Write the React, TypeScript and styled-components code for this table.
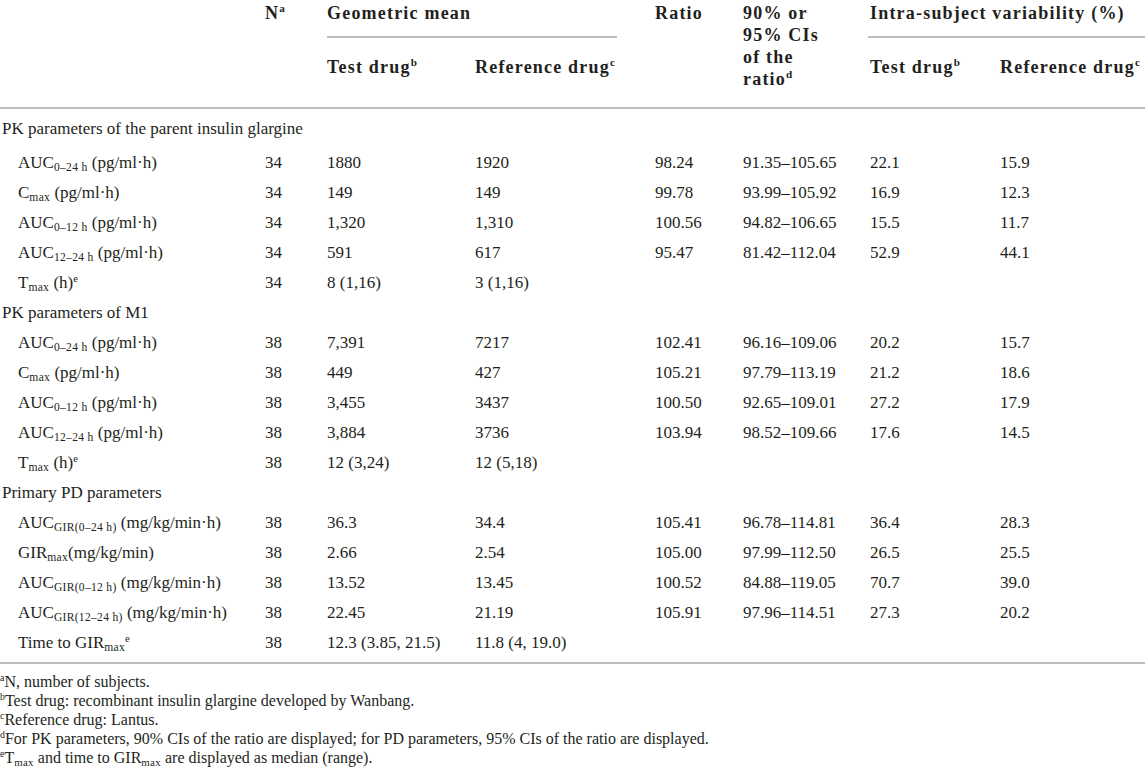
import React from "react";
import styled, { createGlobalStyle } from "styled-components";

const GlobalStyle = createGlobalStyle`
  html, body {
    margin: 0;
    padding: 0;
    background: #ffffff;
  }
  body {
    font-family: "Liberation Serif", "Times New Roman", serif;
    color: #231f20;
  }
`;

const Page = styled.div`
  width: 1145px;
  overflow: hidden;
`;

const Table = styled.table`
  width: 1145px;
  table-layout: fixed;
  border-collapse: collapse;
  font-size: 17px;
`;

const Head = styled.thead`
  border-bottom: 2px solid #bdbdbd;
`;

const Body = styled.tbody`
  border-bottom: 2px solid #bdbdbd;
`;

const TopCell = styled.th`
  padding: 2px 0 0;
  text-align: left;
  vertical-align: top;
  font-size: 18px;
  font-weight: bold;
  letter-spacing: 1.2px;
  line-height: 22px;
  white-space: nowrap;
`;

const SubCell = styled.th`
  padding: 18px 0 29px;
  text-align: left;
  vertical-align: top;
  font-size: 18px;
  font-weight: bold;
  letter-spacing: 1.2px;
  line-height: 22px;
  white-space: nowrap;
`;

const GroupTitle = styled.div<{ $trimRight: number; $pullLeft?: number }>`
  padding-bottom: 12px;
  border-bottom: 2px solid #bdbdbd;
  margin-right: ${(p) => p.$trimRight}px;
  margin-left: -${(p) => p.$pullLeft ?? 0}px;
  padding-left: ${(p) => p.$pullLeft ?? 0}px;
`;

const BodyRow = styled.tr<{ $height: number; $padBottom?: number }>`
  height: ${(p) => p.$height}px;
  & > td {
    padding-bottom: ${(p) => p.$padBottom ?? 0}px;
  }
`;

const Cell = styled.td`
  padding: 0;
  vertical-align: middle;
  line-height: 20px;
  white-space: nowrap;
`;

const SectionCell = styled(Cell)`
  padding-left: 2px;
`;

const LabelCell = styled(Cell)`
  && {
    padding-left: 18px;
  }
`;

const Sub = styled.sub`
  font-size: 0.68em;
  line-height: 0;
  vertical-align: -0.25em;
  letter-spacing: 0.3px;
`;

const Sup = styled.sup`
  font-size: 0.62em;
  line-height: 0;
  vertical-align: 0.6em;
  letter-spacing: 0;
`;

const Notes = styled.div`
  padding: 8px 0 0;
  font-size: 16px;
  line-height: 19px;
`;

const Note = styled.div`
  white-space: nowrap;
`;

type ItemRow = {
  label: React.ReactNode;
  n: string;
  test: string;
  ref: string;
  ratio?: string;
  ci?: string;
  vTest?: string;
  vRef?: string;
};

type Section = {
  title: string;
  rows: ItemRow[];
};

const Auc = ({ sub }: { sub: string }) => (
  <>
    AUC<Sub>{sub}</Sub>
  </>
);

const sections: Section[] = [
  {
    title: "PK parameters of the parent insulin glargine",
    rows: [
      { label: <><Auc sub="0–24 h" /> (pg/ml·h)</>, n: "34", test: "1880", ref: "1920", ratio: "98.24", ci: "91.35–105.65", vTest: "22.1", vRef: "15.9" },
      { label: <>C<Sub>max</Sub> (pg/ml·h)</>, n: "34", test: "149", ref: "149", ratio: "99.78", ci: "93.99–105.92", vTest: "16.9", vRef: "12.3" },
      { label: <><Auc sub="0–12 h" /> (pg/ml·h)</>, n: "34", test: "1,320", ref: "1,310", ratio: "100.56", ci: "94.82–106.65", vTest: "15.5", vRef: "11.7" },
      { label: <><Auc sub="12–24 h" /> (pg/ml·h)</>, n: "34", test: "591", ref: "617", ratio: "95.47", ci: "81.42–112.04", vTest: "52.9", vRef: "44.1" },
      { label: <>T<Sub>max</Sub> (h)<Sup>e</Sup></>, n: "34", test: "8 (1,16)", ref: "3 (1,16)" },
    ],
  },
  {
    title: "PK parameters of M1",
    rows: [
      { label: <><Auc sub="0–24 h" /> (pg/ml·h)</>, n: "38", test: "7,391", ref: "7217", ratio: "102.41", ci: "96.16–109.06", vTest: "20.2", vRef: "15.7" },
      { label: <>C<Sub>max</Sub> (pg/ml·h)</>, n: "38", test: "449", ref: "427", ratio: "105.21", ci: "97.79–113.19", vTest: "21.2", vRef: "18.6" },
      { label: <><Auc sub="0–12 h" /> (pg/ml·h)</>, n: "38", test: "3,455", ref: "3437", ratio: "100.50", ci: "92.65–109.01", vTest: "27.2", vRef: "17.9" },
      { label: <><Auc sub="12–24 h" /> (pg/ml·h)</>, n: "38", test: "3,884", ref: "3736", ratio: "103.94", ci: "98.52–109.66", vTest: "17.6", vRef: "14.5" },
      { label: <>T<Sub>max</Sub> (h)<Sup>e</Sup></>, n: "38", test: "12 (3,24)", ref: "12 (5,18)" },
    ],
  },
  {
    title: "Primary PD parameters",
    rows: [
      { label: <><Auc sub="GIR(0–24 h)" /> (mg/kg/min·h)</>, n: "38", test: "36.3", ref: "34.4", ratio: "105.41", ci: "96.78–114.81", vTest: "36.4", vRef: "28.3" },
      { label: <>GIR<Sub>max</Sub>(mg/kg/min)</>, n: "38", test: "2.66", ref: "2.54", ratio: "105.00", ci: "97.99–112.50", vTest: "26.5", vRef: "25.5" },
      { label: <><Auc sub="GIR(0–12 h)" /> (mg/kg/min·h)</>, n: "38", test: "13.52", ref: "13.45", ratio: "100.52", ci: "84.88–119.05", vTest: "70.7", vRef: "39.0" },
      { label: <><Auc sub="GIR(12–24 h)" /> (mg/kg/min·h)</>, n: "38", test: "22.45", ref: "21.19", ratio: "105.91", ci: "97.96–114.51", vTest: "27.3", vRef: "20.2" },
      { label: <>Time to GIR<Sub>max</Sub><Sup>e</Sup></>, n: "38", test: "12.3 (3.85, 21.5)", ref: "11.8 (4, 19.0)" },
    ],
  },
];

const colWidths = [265, 62, 148, 180, 88, 127, 130, 145];

export default function App() {
  const lastSection = sections.length - 1;
  return (
    <Page>
      <GlobalStyle />
      <Table>
        <colgroup>
          {colWidths.map((w, i) => (
            <col key={i} style={{ width: w }} />
          ))}
        </colgroup>
        <Head>
          <tr>
            <TopCell rowSpan={2} />
            <TopCell rowSpan={2}>
              N<Sup>a</Sup>
            </TopCell>
            <TopCell colSpan={2}>
              <GroupTitle $trimRight={38}>Geometric mean</GroupTitle>
            </TopCell>
            <TopCell rowSpan={2}>Ratio</TopCell>
            <TopCell rowSpan={2}>
              90% or
              <br />
              95% CIs
              <br />
              of the
              <br />
              ratio<Sup>d</Sup>
            </TopCell>
            <TopCell colSpan={2}>
              <GroupTitle $trimRight={0} $pullLeft={2}>
                Intra-subject variability (%)
              </GroupTitle>
            </TopCell>
          </tr>
          <tr>
            <SubCell>
              Test drug<Sup>b</Sup>
            </SubCell>
            <SubCell>
              Reference drug<Sup>c</Sup>
            </SubCell>
            <SubCell>
              Test drug<Sup>b</Sup>
            </SubCell>
            <SubCell>
              Reference drug<Sup>c</Sup>
            </SubCell>
          </tr>
        </Head>
        <Body>
          {sections.map((s, si) => (
            <React.Fragment key={s.title}>
              <BodyRow $height={si === 0 ? 40 : 30}>
                <SectionCell colSpan={8}>{s.title}</SectionCell>
              </BodyRow>
              {s.rows.map((r, ri) => {
                const isLast = si === lastSection && ri === s.rows.length - 1;
                return (
                  <BodyRow key={ri} $height={isLast ? 35 : 30} $padBottom={isLast ? 5 : 0}>
                    <LabelCell>{r.label}</LabelCell>
                    <Cell>{r.n}</Cell>
                    <Cell>{r.test}</Cell>
                    <Cell>{r.ref}</Cell>
                    <Cell>{r.ratio}</Cell>
                    <Cell>{r.ci}</Cell>
                    <Cell>{r.vTest}</Cell>
                    <Cell>{r.vRef}</Cell>
                  </BodyRow>
                );
              })}
            </React.Fragment>
          ))}
        </Body>
      </Table>
      <Notes>
        <Note>
          <Sup>a</Sup>N, number of subjects.
        </Note>
        <Note>
          <Sup>b</Sup>Test drug: recombinant insulin glargine developed by Wanbang.
        </Note>
        <Note>
          <Sup>c</Sup>Reference drug: Lantus.
        </Note>
        <Note>
          <Sup>d</Sup>For PK parameters, 90% CIs of the ratio are displayed; for PD parameters, 95% CIs of the ratio are displayed.
        </Note>
        <Note>
          <Sup>e</Sup>T<Sub>max</Sub> and time to GIR<Sub>max</Sub> are displayed as median (range).
        </Note>
      </Notes>
    </Page>
  );
}
